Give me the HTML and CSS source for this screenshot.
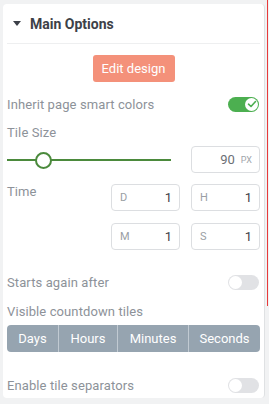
FILE: index.html
```html
<!DOCTYPE html>
<html>
<head>
<meta charset="utf-8">
<link rel="stylesheet" href="styles.css">
</head>
<body>
<div class="panel">
  <div class="card">
    <div class="head">
      <span class="caret"></span>
      <span class="title">Main Options</span>
    </div>
    <div class="body">
      <div class="btn-row"><button class="edit">Edit design</button></div>
      <div class="row toggle-row first">
        <span class="label">Inherit page smart colors</span>
        <span class="toggle on"><span class="knob"><svg width="10" height="8" viewBox="0 0 10 8"><path d="M1.5 4.2 L4 6.5 L8.5 1.5" fill="none" stroke="#4caf50" stroke-width="1.6" stroke-linecap="round" stroke-linejoin="round"/></svg></span></span>
      </div>
      <div class="label block">Tile Size</div>
      <div class="row slider-row">
        <div class="slider"><span class="track"></span><span class="thumb"></span></div>
        <div class="field num"><span class="val">90</span><span class="unit">PX</span></div>
      </div>
      <div class="time">
        <span class="label">Time</span>
        <div class="grid">
          <div class="field"><span class="pre">D</span><span class="val">1</span></div>
          <div class="field"><span class="pre">H</span><span class="val">1</span></div>
          <div class="field"><span class="pre">M</span><span class="val">1</span></div>
          <div class="field"><span class="pre">S</span><span class="val">1</span></div>
        </div>
      </div>
      <div class="row toggle-row gap-top">
        <span class="label">Starts again after</span>
        <span class="toggle"><span class="knob"></span></span>
      </div>
      <div class="label block">Visible countdown tiles</div>
      <div class="tabs">
        <span class="tab t1">Days</span>
        <span class="tab t2">Hours</span>
        <span class="tab t3">Minutes</span>
        <span class="tab t4">Seconds</span>
      </div>
      <div class="row toggle-row last">
        <span class="label">Enable tile separators</span>
        <span class="toggle"><span class="knob"></span></span>
      </div>
    </div>
  </div>
  <span class="redline"></span>
</div>
</body>
</html>
```
FILE: styles.css
```css
html, body { margin: 0; padding: 0; }
body {
  background: #f1f2f3;
  font-family: Roboto, "Liberation Sans", sans-serif;
  width: 269px;
  height: 404px;
  overflow: hidden;
}
.panel { position: relative; padding: 4px 3px 0 3px; }
.card {
  background: #fff;
  border-radius: 4px;
  border-right: 1px solid #dfe1e3;
  width: 262px;
  height: 394px;
  box-sizing: border-box;
}
.head {
  display: flex;
  align-items: center;
  height: 39px;
  margin: 0 4px;
  border-bottom: 1px solid #eeeff0;
}
.caret {
  width: 0; height: 0;
  border-left: 4px solid transparent;
  border-right: 4px solid transparent;
  border-top: 5px solid #3c4048;
  margin-left: 6px;
  margin-right: 9px;
}
.title { font-size: 14px; font-weight: 700; color: #3d4148; }
.body { padding: 0 4px; }
.btn-row { display: flex; justify-content: center; padding-top: 11px; }
.edit {
  background: #f4917a;
  border: none;
  color: #fff;
  font-family: inherit;
  font-size: 13px;
  width: 82px;
  height: 27px;
  border-radius: 3px;
  padding: 0;
}
.label { font-size: 13px; color: #8d9299; letter-spacing: 0.1px; }
.block { display: block; }
.row { display: flex; align-items: center; justify-content: space-between; }
.toggle-row { height: 22px; margin-top: 11px; margin-bottom: 7px; }
.toggle-row.first { margin-bottom: 10px; }
.toggle {
  position: relative;
  width: 31px; height: 15px;
  border-radius: 8px;
  background: #e1e2e5;
  display: block;
  margin-right: 1px;
}
.toggle .knob {
  position: absolute; top: 1px; left: 1px;
  width: 13px; height: 13px; border-radius: 50%;
  background: #fff;
  display: flex; align-items: center; justify-content: center;
}
.toggle.on { background: #4caf50; }
.toggle.on .knob { left: auto; right: 1px; }
.slider-row { margin-top: 6px; height: 27px; }
.slider { position: relative; width: 164px; height: 18px; }
.track { position: absolute; left: 0; right: 0; top: 8px; height: 2px; background: #4b8a3c; }
.thumb {
  position: absolute; left: 28px; top: 1px;
  width: 13px; height: 13px; border-radius: 50%;
  border: 2px solid #4b8a3c; background: #fff;
}
.field {
  width: 69px; height: 27px; box-sizing: border-box;
  border: 1px solid #dcdee1; border-radius: 4px;
  display: flex; align-items: center; justify-content: space-between;
  padding: 0 7px 0 8px;
}
.field .pre { font-size: 11px; color: #9a9ea4; }
.field .val { font-size: 13px; color: #3d4148; }
.field.num { justify-content: flex-end; gap: 6px; }
.field.num .val { color: #6b6f75; }
.field .unit { font-size: 9px; color: #a0a4aa; }
.time { display: flex; justify-content: space-between; margin-top: 11px; }
.grid { display: grid; grid-template-columns: 69px 69px; column-gap: 11px; row-gap: 12px; }
.gap-top { margin-top: 21px; margin-bottom: 11px; }
.tabs {
  display: flex; margin-top: 6px;
  background: #96a4b0; border-radius: 4px; height: 27px;
}
.tab {
  color: #fff; font-size: 13px;
  display: flex; align-items: center; justify-content: center;
  border-right: 1px solid #c1cad2;
}
.tab:last-child { border-right: none; }
.t1 { width: 51px; }
.t2 { width: 58px; }
.t3 { width: 70px; }
.t4 { flex: 1; }
.last { margin-top: 22px; }
.redline {
  position: absolute; right: 1px; top: 0;
  width: 1px; height: 306px; background: #e83a3a;
}
```
